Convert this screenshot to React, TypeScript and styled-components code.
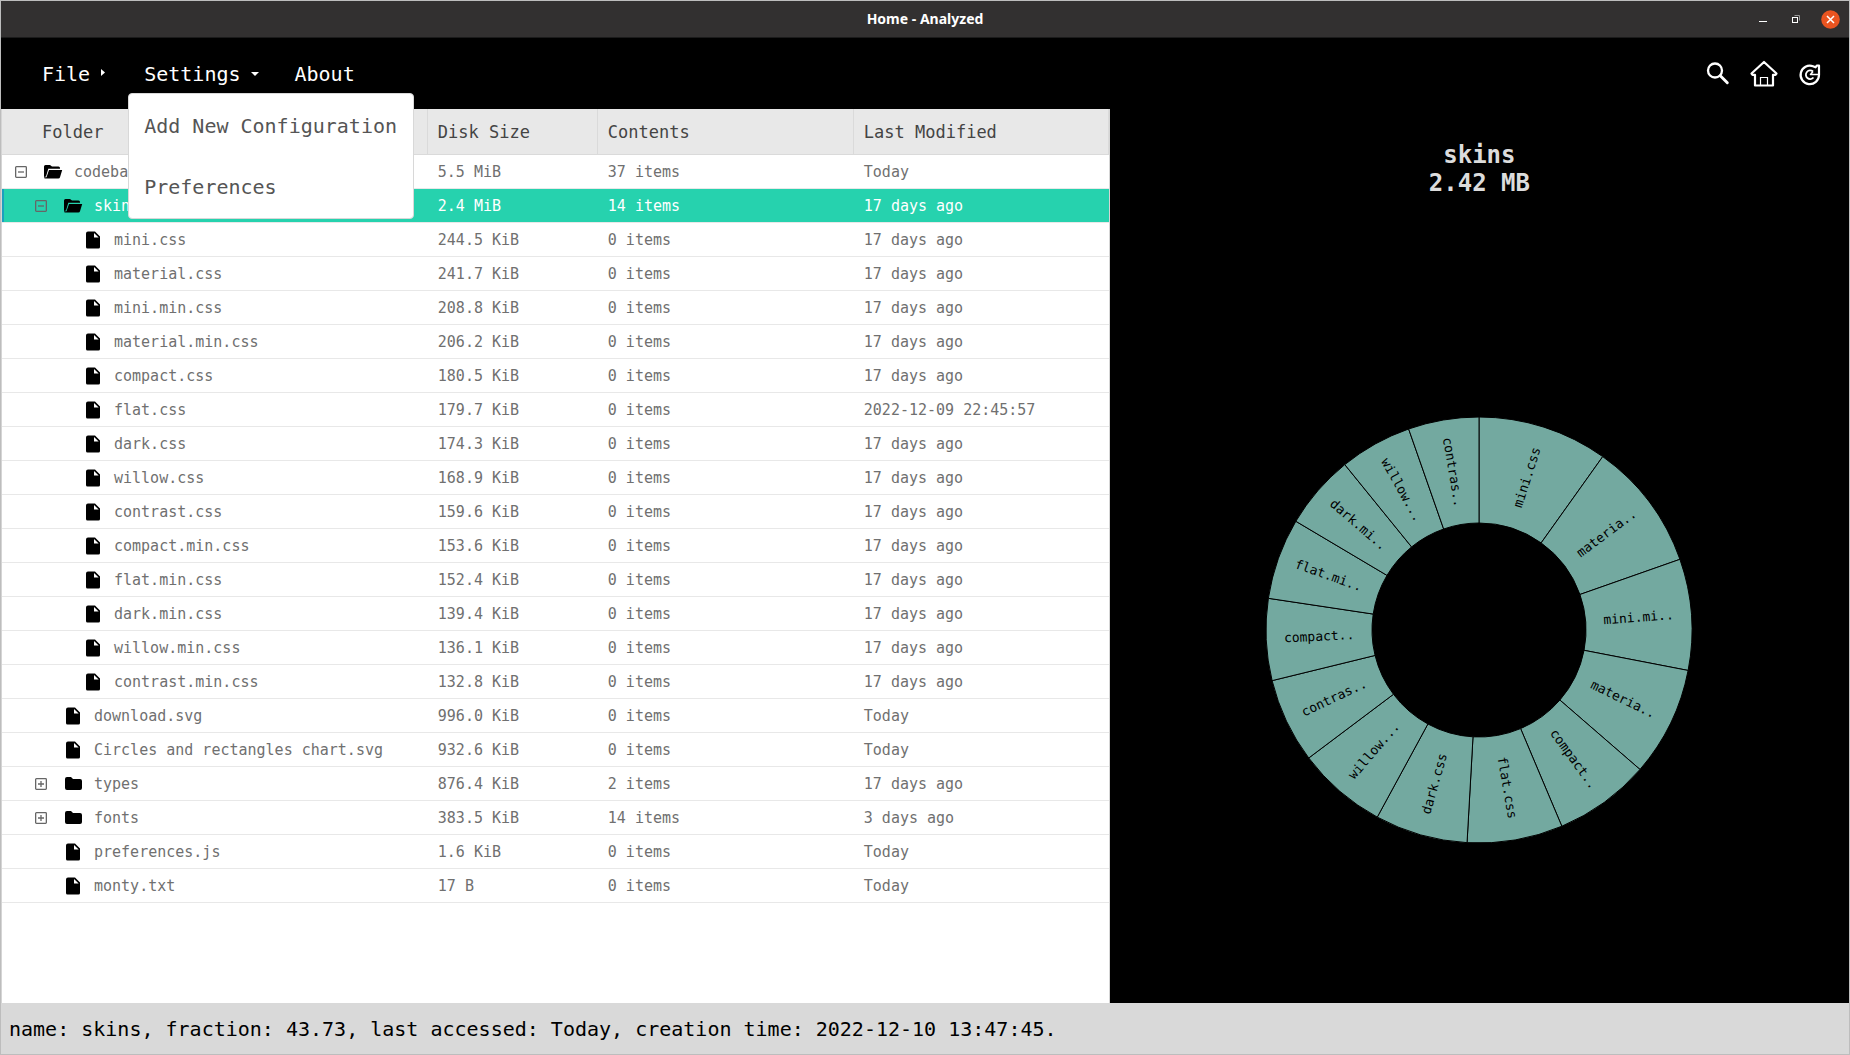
import React, { useState } from "react";
import styled, { createGlobalStyle, css } from "styled-components";

const mono = `"DejaVu Sans Mono", monospace`;

const Global = createGlobalStyle`
  *, *::before, *::after { box-sizing: border-box; }
  body { margin: 0; background: #000; }
  button { font: inherit; color: inherit; background: none; border: 0; padding: 0; margin: 0; cursor: pointer; }
`;

const Window = styled.div`
  min-height: 100vh;
  display: flex;
  flex-direction: column;
  border: 1px solid #bdbdbd;
  background: #000;
  font-family: ${mono};
`;

const TitleBar = styled.header`
  height: 37px;
  display: grid;
  grid-template-columns: 1fr auto 1fr;
  align-items: center;
  background: #323030;
  border-bottom: 1px solid #1b1b1b;
`;

const WindowTitle = styled.h1`
  grid-column: 2;
  margin: 0;
  font: 700 14px/20px "Noto Sans", sans-serif;
  color: #fff;
`;

const WindowControls = styled.div`
  display: flex;
  justify-content: flex-end;
  align-items: center;
  gap: 15px;
  padding-right: 9px;
`;

const ControlButton = styled.button`
  width: 19px;
  height: 19px;
  display: grid;
  place-items: center;
`;

const MenuBar = styled.nav`
  height: 71px;
  display: flex;
  align-items: center;
  justify-content: space-between;
  padding: 0 25px 0 41px;
  color: #fff;
`;

const MenuList = styled.ul`
  display: flex;
  gap: 36px;
  margin: 0;
  padding: 0;
  list-style: none;
`;

const MenuItem = styled.li`
  position: relative;
`;

const MenuButton = styled.button`
  display: flex;
  align-items: center;
  gap: 10px;
  font-size: 20px;
  line-height: 36px;
  white-space: nowrap;
`;

const Dropdown = styled.ul`
  position: absolute;
  z-index: 2;
  top: 37px;
  left: -16px;
  width: 286px;
  margin: 0;
  padding: 2px 0 0;
  list-style: none;
  background: #fff;
  border: 1px solid #d8d8d8;
  border-radius: 4px;
`;

const DropdownButton = styled.button`
  width: 100%;
  height: 61px;
  padding: 0 15px;
  text-align: left;
  font-size: 20px;
  line-height: 36px;
  white-space: nowrap;
  color: #555;
`;

const Tools = styled.div`
  display: flex;
  align-items: center;
  gap: 18px;
`;

const ToolButton = styled.button`
  width: 28px;
  height: 28px;
  display: grid;
  place-items: center;
`;

const Main = styled.main`
  flex: 1;
  display: grid;
  grid-template-columns: 3fr 2fr;
`;

const TreePanel = styled.section`
  background: #fff;
  border: solid #d5d5d5;
  border-width: 0 1px;
`;

const TreeTable = styled.table`
  width: 100%;
  table-layout: fixed;
  border-collapse: separate;
  border-spacing: 0;
`;

const NameCol = styled.col``;
const SizeCol = styled.col`
  width: 170px;
`;
const ContentsCol = styled.col`
  width: 256px;
`;
const DateCol = styled.col`
  width: 255px;
`;

const HeadCell = styled.th<{ $first?: boolean }>`
  height: 46px;
  padding: 0 0 0 ${(p) => (p.$first ? 40 : 10)}px;
  text-align: left;
  font-weight: 400;
  font-size: 17px;
  line-height: 24px;
  color: #444;
  background: #e8e8e8;
  border-right: 1px solid #dadada;
  border-bottom: 1px solid #dadada;
`;

const Cell = styled.td`
  height: 34px;
  padding: 0 0 0 10px;
  font-size: 15px;
  line-height: 24px;
  white-space: nowrap;
  border-bottom: 1px solid #e8e8e8;
`;

const Row = styled.tr<{ $selected?: boolean }>`
  color: #707070;
  ${(p) =>
    p.$selected &&
    css`
      color: #fff;
      background: #26d2ae;
      & > td:first-child { box-shadow: inset 2px 0 #1c9fbe; }
    `}
`;

const NameCell = styled(Cell)<{ $level: number }>`
  padding-left: ${(p) => 13 + p.$level * 20}px;
`;

const NameLine = styled.div`
  display: flex;
  align-items: center;
`;

const Slot = styled.span`
  width: 28px;
  height: 24px;
  display: flex;
  align-items: center;
`;

const IconSlot = styled(Slot)`
  width: 31px;
`;

const ToggleButton = styled.button`
  display: flex;
`;

const ChartPanel = styled.section`
  display: flex;
  flex-direction: column;
  align-items: center;
  padding-top: 32px;
`;

const ChartTitle = styled.h2`
  margin: 0;
  text-align: center;
  font-size: 24px;
  font-weight: 700;
  line-height: 28px;
  color: #dcdcdc;
`;

const ChartArea = styled.div`
  flex: 1;
  display: grid;
  place-items: center;
  padding-top: 60px;
`;

const StatusBar = styled.footer`
  height: 51px;
  display: flex;
  align-items: center;
  padding: 0 8px;
  font-size: 20px;
  line-height: 36px;
  color: #000;
  background: #d9d9d9;
`;

type Kind = "open" | "closed" | "file";
type Entry = { name: string; level: number; kind: Kind; size: string; items: number; modified: string };

const skins: [string, number, string?][] = [
  ["mini.css", 244.5],
  ["material.css", 241.7],
  ["mini.min.css", 208.8],
  ["material.min.css", 206.2],
  ["compact.css", 180.5],
  ["flat.css", 179.7, "2022-12-09 22:45:57"],
  ["dark.css", 174.3],
  ["willow.css", 168.9],
  ["contrast.css", 159.6],
  ["compact.min.css", 153.6],
  ["flat.min.css", 152.4],
  ["dark.min.css", 139.4],
  ["willow.min.css", 136.1],
  ["contrast.min.css", 132.8],
];

const entries: Entry[] = [
  { name: "codebase", level: 0, kind: "open", size: "5.5 MiB", items: 37, modified: "Today" },
  { name: "skins", level: 1, kind: "open", size: "2.4 MiB", items: 14, modified: "17 days ago" },
  ...skins.map(([name, kib, date]): Entry => ({
    name, level: 2, kind: "file", size: `${kib.toFixed(1)} KiB`, items: 0, modified: date ?? "17 days ago",
  })),
  { name: "download.svg", level: 1, kind: "file", size: "996.0 KiB", items: 0, modified: "Today" },
  { name: "Circles and rectangles chart.svg", level: 1, kind: "file", size: "932.6 KiB", items: 0, modified: "Today" },
  { name: "types", level: 1, kind: "closed", size: "876.4 KiB", items: 2, modified: "17 days ago" },
  { name: "fonts", level: 1, kind: "closed", size: "383.5 KiB", items: 14, modified: "3 days ago" },
  { name: "preferences.js", level: 1, kind: "file", size: "1.6 KiB", items: 0, modified: "Today" },
  { name: "monty.txt", level: 1, kind: "file", size: "17 B", items: 0, modified: "Today" },
];

const KindIcon = ({ kind }: { kind: Kind }) => {
  if (kind === "open")
    return (
      <svg width="20" height="16" viewBox="0 0 20 16">
        <path d="M1 13V2.500Q1 1 2.500 1H7l2 1.500h6.500q1.500 0 1.500 1.500v.8H5.300L3 12.500z" />
        <path d="M6 6h13.200L17 13.200Q16.700 14.500 15.300 14.500H2.200q-1.200 0-1.200-1.200H3.500z" />
      </svg>
    );
  if (kind === "closed")
    return (
      <svg width="20" height="16" viewBox="0 0 20 16">
        <path d="M2 3Q2 1 4 1h4l2 2h7q2 0 2 2v7q0 2-2 2H4q-2 0-2-2z" />
      </svg>
    );
  return (
    <svg width="20" height="20" viewBox="0 0 20 20">
      <path fillRule="evenodd" d="M5 1.500h7l5 5V17q0 1.500-1.500 1.500H4.500Q3 18.500 3 17V3.500q0-2 2-2zM11 3v4.500h4.700z" />
    </svg>
  );
};

const ToggleIcon = ({ open }: { open: boolean }) => (
  <svg width="12" height="12" viewBox="0 0 12 12" fill="none" stroke="#666" strokeWidth="1.300">
    <rect x=".65" y=".65" width="10.700" height="10.700" rx=".8" />
    <path d={open ? "M3 6h6" : "M3 6h6M6 3v6"} />
  </svg>
);

const OUTER = 213;
const INNER = 107;
const MID = (OUTER + INNER) / 2;

const polar = (radius: number, degrees: number) => {
  const a = (degrees * Math.PI) / 180;
  return [radius * Math.sin(a), -radius * Math.cos(a)];
};

const shorten = (name: string) => (name.length > 8 ? `${name.slice(0, 7)}..` : name);

const SliceText = styled.text`
  font-family: ${mono};
  font-size: 13px;
  text-anchor: middle;
  dominant-baseline: middle;
  fill: #000;
`;

const Donut = () => {
  const total = skins.reduce((sum, s) => sum + s[1], 0);
  let start = 0;
  return (
    <svg width="428" height="428" viewBox="-214 -214 428 428" role="img" aria-label="Size of each file in skins">
      {skins.map(([name, value]) => {
        const end = start + (value / total) * 360;
        const mid = (start + end) / 2;
        const [x1, y1] = polar(OUTER, start);
        const [x2, y2] = polar(OUTER, end);
        const [x3, y3] = polar(INNER, end);
        const [x4, y4] = polar(INNER, start);
        const [tx, ty] = polar(MID, mid);
        start = end;
        return (
          <g key={name}>
            <path
              d={`M${x1} ${y1}A${OUTER} ${OUTER} 0 0 1 ${x2} ${y2}L${x3} ${y3}A${INNER} ${INNER} 0 0 0 ${x4} ${y4}Z`}
              fill="#73a9a0"
              stroke="#000"
              strokeWidth="1"
            />
            <SliceText transform={`translate(${tx} ${ty}) rotate(${mid < 180 ? mid - 90 : mid + 90})`}>
              {shorten(name)}
            </SliceText>
          </g>
        );
      })}
    </svg>
  );
};

export default function App() {
  const [menuOpen, setMenuOpen] = useState(true);
  const [selected, setSelected] = useState("skins");
  return (
    <Window>
      <Global />
      <TitleBar>
        <WindowTitle>Home - Analyzed</WindowTitle>
        <WindowControls>
          <ControlButton aria-label="Minimize">
            <svg width="19" height="19" viewBox="0 0 19 19"><path d="M6 11.500h8" stroke="#fff" /></svg>
          </ControlButton>
          <ControlButton aria-label="Restore">
            <svg width="19" height="19" viewBox="0 0 19 19" fill="none">
              <path d="M7.500 5.500h5v5" stroke="#999" />
              <rect x="5.500" y="7.500" width="5" height="5" stroke="#fff" />
            </svg>
          </ControlButton>
          <ControlButton aria-label="Close">
            <svg width="19" height="19" viewBox="0 0 19 19">
              <circle cx="9.500" cy="9.500" r="9.300" fill="#e95420" />
              <path d="M6 6l7 7M13 6l-7 7" stroke="#fff" strokeWidth="1.500" />
            </svg>
          </ControlButton>
        </WindowControls>
      </TitleBar>
      <MenuBar>
        <MenuList>
          <MenuItem>
            <MenuButton>
              File
              <svg width="8" height="10" viewBox="0 0 8 10" fill="#fff"><path d="M1 0l4 3.500-4 3.500z" /></svg>
            </MenuButton>
          </MenuItem>
          <MenuItem>
            <MenuButton aria-expanded={menuOpen} onClick={() => setMenuOpen(!menuOpen)}>
              Settings
              <svg width="8" height="8" viewBox="0 0 8 8" fill="#fff"><path d="M0 2h8L4 6z" /></svg>
            </MenuButton>
            {menuOpen && (
              <Dropdown>
                <li><DropdownButton>Add New Configuration</DropdownButton></li>
                <li><DropdownButton>Preferences</DropdownButton></li>
              </Dropdown>
            )}
          </MenuItem>
          <MenuItem>
            <MenuButton>About</MenuButton>
          </MenuItem>
        </MenuList>
        <Tools>
          <ToolButton aria-label="Search">
            <svg width="24" height="24" viewBox="0 0 24 24" fill="none" stroke="#fff">
              <circle cx="9" cy="8.500" r="7" strokeWidth="2.300" />
              <path d="M14.300 13.800l7 7" strokeWidth="2.900" strokeLinecap="round" />
            </svg>
          </ToolButton>
          <ToolButton aria-label="Home">
            <svg width="28" height="28" viewBox="0 0 28 28" fill="none" stroke="#fff" strokeLinejoin="round" strokeLinecap="round">
              <path d="M14 2L1.500 13.500 2.500 14.800H5V25.500H23V14.800H25.500L26.500 13.500z" strokeWidth="2.200" />
              <path d="M10.500 25V17.500h7V25" strokeWidth="1.200" strokeLinejoin="miter" />
            </svg>
          </ToolButton>
          <ToolButton aria-label="Refresh">
            <svg width="24" height="24" viewBox="0 0 24 24" fill="none" stroke="#fff" strokeLinejoin="round">
              <path d="M21 3.500V13A9.200 9.200 0 1 1 15 4.300L17.500 5.300 19 3.500z" strokeWidth="2.200" />
              <path d="M15 9.500A4.300 4.300 0 1 0 15.500 15.500" strokeWidth="1.800" />
              <path d="M21 12.500H12.500L15 9.500" strokeWidth="1.600" />
            </svg>
          </ToolButton>
        </Tools>
      </MenuBar>
      <Main>
        <TreePanel>
          <TreeTable>
            <colgroup>
              <NameCol />
              <SizeCol />
              <ContentsCol />
              <DateCol />
            </colgroup>
            <thead>
              <tr>
                <HeadCell $first>Folder</HeadCell>
                <HeadCell>Disk Size</HeadCell>
                <HeadCell>Contents</HeadCell>
                <HeadCell>Last Modified</HeadCell>
              </tr>
            </thead>
            <tbody>
              {entries.map((e) => (
                <Row key={e.name} $selected={e.name === selected} onClick={() => setSelected(e.name)}>
                  <NameCell $level={e.level}>
                    <NameLine>
                      <Slot>
                        {e.kind !== "file" && (
                          <ToggleButton aria-label={e.kind === "open" ? "Collapse" : "Expand"}>
                            <ToggleIcon open={e.kind === "open"} />
                          </ToggleButton>
                        )}
                      </Slot>
                      <IconSlot><KindIcon kind={e.kind} /></IconSlot>
                      {e.name}
                    </NameLine>
                  </NameCell>
                  <Cell>{e.size}</Cell>
                  <Cell>{e.items} items</Cell>
                  <Cell>{e.modified}</Cell>
                </Row>
              ))}
            </tbody>
          </TreeTable>
        </TreePanel>
        <ChartPanel>
          <ChartTitle>skins<br />2.42 MB</ChartTitle>
          <ChartArea><Donut /></ChartArea>
        </ChartPanel>
      </Main>
      <StatusBar>name: skins, fraction: 43.73, last accessed: Today, creation time: 2022-12-10 13:47:45.</StatusBar>
    </Window>
  );
}
